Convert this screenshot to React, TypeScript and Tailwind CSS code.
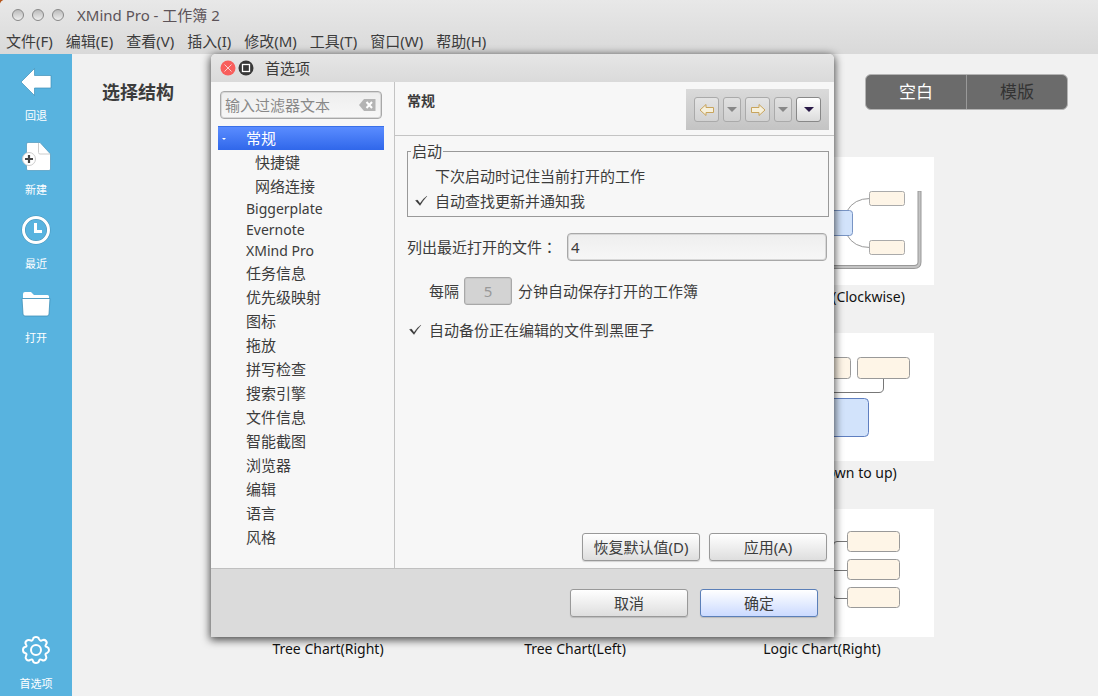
import React from 'react';

const MENUS = ['文件(F)', '编辑(E)', '查看(V)', '插入(I)', '修改(M)', '工具(T)', '窗口(W)', '帮助(H)'];

const TREE = [
  '任务信息',
  '优先级映射',
  '图标',
  '拖放',
  '拼写检查',
  '搜索引擎',
  '文件信息',
  '智能截图',
  '浏览器',
  '编辑',
  '语言',
  '风格',
];

const BUTTON =
  'h-7 w-[118px] rounded-[3px] border border-[#999] bg-linear-to-b from-white to-[#dedede] text-[15px] leading-6 shadow-[0_1px_1px_rgba(0,0,0,0.15)]';

const BackIcon = () => (
  <svg width="32" height="32" viewBox="0 0 32 32">
    <path d="M1 16 14.500 2.500V9.500H31V22H14.500V29.500Z" fill="#fff" stroke="#3f8fb8" strokeWidth="0.700" />
  </svg>
);

const NewIcon = () => (
  <svg width="32" height="32" viewBox="0 0 32 32">
    <path
      d="M8 2.500H20L30.500 14V29Q30.500 30.500 29 30.500H8Q6.500 30.500 6.500 29V4Q6.500 2.500 8 2.500Z"
      fill="#fff"
      stroke="#4d97bb"
      strokeWidth="0.700"
    />
    <path d="M18.500 3V12.500Q18.500 14 20 14H30" fill="none" stroke="#ccc" />
    <circle cx="9" cy="19" r="6.500" fill="#fff" stroke="#ccc" />
    <path d="M9 15V23M5 19H13" stroke="#444" strokeWidth="2.200" />
  </svg>
);

const RecentIcon = () => (
  <svg width="32" height="32" viewBox="0 0 32 32" fill="none">
    <circle cx="16" cy="16" r="12.500" stroke="#4592b8" strokeWidth="4" />
    <circle cx="16" cy="16" r="12.500" stroke="#fff" strokeWidth="3" />
    <path d="M15.500 9V17.500H22" stroke="#fff" strokeWidth="3" />
  </svg>
);

const OpenIcon = () => (
  <svg width="32" height="32" viewBox="0 0 32 32">
    <path d="M3 10V6Q3 4 5 4H11L14 7H27.500Q29 7 29 8.500V10Z" fill="#fff" />
    <path d="M2 10.500H30L29 26Q29 28 27 28H5Q3 28 3 26Z" fill="#fff" stroke="#3f8fb8" strokeWidth="0.800" />
  </svg>
);

const GearIcon = () => (
  <svg width="32" height="32" viewBox="0 0 32 32" fill="none" stroke="#fff" strokeWidth="2">
    <path
      strokeLinejoin="round"
      d="M13 5Q13.500 3 16 3T19 5Q20 7.500 22.500 6.200Q24.500 5.300 26 7T26 10.500Q24.500 12.500 27 13Q29 13.700 29 16T27 19Q24.500 19.800 26 22Q27 24 25.500 25.500T22 26Q19.600 24.600 19 27Q18.500 29 16 29T13 27Q12.400 24.600 10 26Q8 27 6.500 25.500T6 22Q7.500 19.800 5 19Q3 18.500 3 16T5 13Q7.500 12.500 6 10.500Q4.700 8.500 6.300 7T10 6.200Q12.300 7.500 13 5Z"
    />
    <circle cx="16" cy="16" r="5" />
  </svg>
);

const SideItem: React.FC<{ label: string; children: React.ReactNode }> = ({ label, children }) => (
  <button className="flex flex-col items-center gap-[9px] text-[11px] leading-[18px] text-white">
    {children}
    {label}
  </button>
);

const ClockwiseArt = () => (
  <svg className="w-full" viewBox="0 0 224 128" fill="none">
    <path d="M0 110H204Q209.500 110 209.500 105V34" stroke="#999" strokeWidth="4" />
    <path d="M0 110H204Q209.500 110 209.500 105V34.500" stroke="#c4c4c4" strokeWidth="2" />
    <path d="M137 54Q144 41.500 160 41.500M137 78Q144 90.500 160 90.500" stroke="#999" />
    <g fill="#fef5e7" stroke="#aaa">
      <rect x="159.500" y="34.500" width="35" height="14" rx="2" />
      <rect x="159.500" y="83.500" width="35" height="14" rx="2" />
    </g>
    <rect x="82.500" y="53.500" width="60" height="25" rx="3" fill="#d2e3fb" stroke="#7894c4" />
  </svg>
);

const OrgUpArt = () => (
  <svg className="w-full" viewBox="0 0 224 128" fill="none">
    <path d="M173.500 46V55Q173.500 59.500 169 59.500H50" stroke="#777" />
    <g fill="#fef5e7" stroke="#999">
      <rect x="88.500" y="24.500" width="52" height="21" rx="3" />
      <rect x="147.500" y="24.500" width="52" height="21" rx="3" />
    </g>
    <rect x="65.500" y="65.500" width="93" height="38" rx="4" fill="#d2e3fb" stroke="#5f7fc0" />
  </svg>
);

const LogicArt = () => (
  <svg className="w-full" viewBox="0 0 224 128" fill="none">
    <path d="M138 32.500H127Q123.500 32.500 123.500 36V85Q123.500 89.500 127 89.500H138M100 61.500H138" stroke="#777" />
    <g fill="#fef5e7" stroke="#999">
      <rect x="137.500" y="22.500" width="52" height="20" rx="3" />
      <rect x="137.500" y="50.500" width="52" height="20" rx="3" />
      <rect x="137.500" y="78.500" width="52" height="20" rx="3" />
    </g>
  </svg>
);

const STRUCTURES = [
  { id: 1 },
  { id: 2 },
  { id: 3, name: 'Balanced Map(Clockwise)', art: <ClockwiseArt /> },
  { id: 4 },
  { id: 5 },
  { id: 6, name: 'Org Chart(Down to up)', art: <OrgUpArt /> },
  { id: 7, name: 'Tree Chart(Right)' },
  { id: 8, name: 'Tree Chart(Left)' },
  { id: 9, name: 'Logic Chart(Right)', art: <LogicArt /> },
];

const Check: React.FC<{ label: string; checked?: boolean }> = ({ label, checked }) => (
  <label className="flex h-[25px] items-center gap-[6px]">
    <span className="grid size-4 place-items-center">
      <input type="checkbox" defaultChecked={checked} className="peer col-start-1 row-start-1 size-4 appearance-none" />
      <svg
        className="pointer-events-none invisible col-start-1 row-start-1 peer-checked:visible"
        width="16"
        height="16"
        viewBox="0 0 16 16"
      >
        <path d="M2.500 7.500 4.500 7 7 10.500Q9.500 6 14 3 10 7.500 7 12.500Z" fill="#333" stroke="#333" strokeWidth="0.300" />
      </svg>
    </span>
    {label}
  </label>
);

const ArrowButton: React.FC<{ label: string; flip?: boolean }> = ({ label, flip }) => (
  <button
    aria-label={label}
    disabled
    className="grid h-[25px] w-[25px] place-items-center rounded-[3px] border border-[#aaa] bg-linear-to-b from-[#e4e4e4] to-[#d2d2d2]"
  >
    <svg className={flip ? '-scale-x-100' : ''} width="16" height="14" viewBox="0 0 16 14">
      <path d="M1 7 7 1.500V4.500H14.500V9.500H7V12.500Z" fill="#f6f0dc" stroke="#c8a45c" />
    </svg>
  </button>
);

const DropButton: React.FC<{ label: string }> = ({ label }) => (
  <button
    aria-label={label}
    disabled
    className="grid h-[25px] w-[18px] place-items-center rounded-[3px] border border-[#aaa] bg-linear-to-b from-[#e0e0e0] to-[#d0d0d0]"
  >
    <svg width="10" height="5" viewBox="0 0 10 5">
      <path d="M0 0H10L5 5Z" fill="#888" />
    </svg>
  </button>
);

const Preferences = () => (
  <section
    role="dialog"
    aria-label="首选项"
    className="absolute top-[54px] left-[211px] w-[623px] rounded-t-[5px] bg-[#f7f7f7] shadow-[0_2px_9px_1px_rgba(0,0,0,0.7)]"
  >
    <header className="flex h-7 items-center rounded-t-[5px] bg-linear-to-b from-[#e6e6e6] to-[#dadada] pl-[9px]">
      <button aria-label="关闭" className="mr-[2px]">
        <svg width="16" height="16" viewBox="0 0 16 16">
          <circle cx="8" cy="8" r="7.500" fill="#f85e5c" />
          <path d="M4.500 4.500 11.500 11.500M11.500 4.500 4.500 11.500" stroke="#fbd0cf" />
        </svg>
      </button>
      <button aria-label="最大化">
        <svg width="16" height="16" viewBox="0 0 16 16">
          <circle cx="8" cy="8" r="7.500" fill="#383838" />
          <rect x="4.500" y="4.500" width="7" height="7" fill="none" stroke="#fff" strokeWidth="1.300" />
        </svg>
      </button>
      <h2 className="ml-[11px] text-[15px] leading-6">首选项</h2>
    </header>

    <div className="flex h-[486px]">
      <nav className="w-[184px] border-r border-[#c4c4c4] pt-[9px] pr-[10px] pl-[7px]">
        <div className="mr-[2px] ml-[2px] flex h-7 items-center rounded-[4px] border border-[#a8a8a8] bg-linear-to-b from-[#eee] to-[#f7f7f7] pr-[5px] pl-1 shadow-[inset_0_0_0_1px_#d8d8d8]">
          <input
            aria-label="输入过滤器文本"
            placeholder="输入过滤器文本"
            className="min-w-0 flex-1 text-[15px] leading-6 outline-none placeholder:text-[#888]"
          />
          <button aria-label="清除">
            <svg width="17" height="12" viewBox="0 0 17 12">
              <path d="M0 6 5 0H16.500V12H5Z" fill="#b4b4b4" />
              <path d="M7.500 3 13 9M13 3 7.500 9" stroke="#fff" strokeWidth="2" />
            </svg>
          </button>
        </div>
        <ul className="mt-[7px] text-[15px] leading-6">
          <li className="flex items-center border-t border-[#3a70e8] bg-linear-to-b from-[#5a8cff] to-[#3067ea] pl-1 text-white">
            <svg width="4" height="2" viewBox="0 0 4 2">
              <path d="M0 0H4L2 2Z" fill="#fff" />
            </svg>
            <span className="ml-5 leading-[23px]">常规</span>
          </li>
          <li className="pl-[37px]">快捷键</li>
          <li className="pl-[37px]">网络连接</li>
          <li className="pl-7 text-[14px] leading-[21px]">Biggerplate</li>
          <li className="pl-7 text-[14px] leading-[21px]">Evernote</li>
          <li className="pl-7 text-[14px] leading-[21px]">XMind Pro</li>
          {TREE.map((name) => (
            <li key={name} className="pl-7">
              {name}
            </li>
          ))}
        </ul>
      </nav>

      <div className="flex flex-1 flex-col text-[15px] leading-6">
        <div className="flex h-[54px] items-start justify-between border-b border-[#c4c4c4] pt-[7px] pr-[5px] pl-3">
          <h3 className="text-[14px] leading-6 font-bold">常规</h3>
          <div className="flex gap-1 bg-linear-to-b from-[#dadada] to-[#c4c4c4] p-2">
            <ArrowButton label="后退" />
            <DropButton label="后退历史" />
            <ArrowButton label="前进" flip />
            <DropButton label="前进历史" />
            <button
              aria-label="菜单"
              className="grid h-[25px] w-[25px] place-items-center rounded-[3px] border border-[#888] bg-linear-to-b from-white to-[#dcdcdc]"
            >
              <svg width="10" height="5" viewBox="0 0 10 5">
                <path d="M0 0H10L5 5Z" fill="#2a1a48" />
              </svg>
            </button>
          </div>
        </div>

        <div className="flex flex-1 flex-col pt-[3px] pr-[5px] pb-[7px] pl-3">
          <fieldset className="border border-[#999] pb-[3px] pl-[5px]">
            <legend className="-ml-[2px] px-px leading-6">启动</legend>
            <Check label="下次启动时记住当前打开的工作" />
            <Check label="自动查找更新并通知我" checked />
          </fieldset>
          <div className="mt-4 mr-[2px] flex items-center">
            <label htmlFor="recent" className="w-40">
              列出最近打开的文件<span className="font-['Noto_Sans_CJK_TC',sans-serif]" lang="zh-TW">：</span>
            </label>
            <input
              id="recent"
              defaultValue="4"
              className="h-7 min-w-0 flex-1 rounded-[4px] border border-[#a8a8a8] bg-linear-to-b from-[#eee] to-[#f7f7f7] px-[3px] text-[15px] leading-6 shadow-[inset_0_0_0_1px_#d8d8d8]"
            />
          </div>
          <div className="mt-4 ml-[22px] flex items-center">
            <label htmlFor="interval">每隔</label>
            <input
              id="interval"
              defaultValue="5"
              disabled
              className="mr-[6px] ml-[5px] h-7 w-12 rounded-[3px] border border-[#a8a8a8] bg-[#d3d3d3] text-center text-[15px] leading-6 text-[#999] shadow-[inset_0_0_0_1px_#c8c8c8]"
            />
            <span>分钟自动保存打开的工作簿</span>
          </div>
          <div className="mt-3">
            <Check label="自动备份正在编辑的文件到黑匣子" checked />
          </div>
          <div className="mt-auto mr-[2px] flex justify-end gap-[9px]">
            <button className={BUTTON}>恢复默认值(D)</button>
            <button className={BUTTON}>应用(A)</button>
          </div>
        </div>
      </div>
    </div>

    <footer className="flex h-[69px] items-center justify-end gap-3 border-t border-[#c0c0c0] bg-[#dbdbdb] pr-4">
      <button className={BUTTON}>取消</button>
      <button className="h-7 w-[118px] rounded-[3px] border border-[#5b7fb8] bg-linear-to-b from-white to-[#cbdaff] text-[15px] leading-6 shadow-[0_1px_1px_rgba(0,0,0,0.15)]">
        确定
      </button>
    </footer>
  </section>
);

const WindowDot = () => (
  <span className="size-3 rounded-full border border-[#888] bg-linear-to-b from-[#bbb] to-[#eee]" />
);

export default function App() {
  return (
    <div className="bg-[#b5561c]">
      <div className="relative flex min-h-screen flex-col overflow-hidden rounded-tl-[5px] bg-[#f1f1f1] font-['Noto_Sans','Noto_Sans_CJK_SC',sans-serif] text-[#3c3c3c]">
        <header className="bg-linear-to-b from-[#e8e8e8] to-[#d9d9d9]">
          <div className="flex h-[30px] items-center gap-2 pl-3">
            <WindowDot />
            <WindowDot />
            <WindowDot />
            <h1 className="ml-[5px] text-[15px] leading-6 text-[#5c5358]">XMind Pro - 工作簿 2</h1>
          </div>
          <nav className="flex h-6 items-start gap-[13px] pl-[6px] text-[15px] leading-[22px]">
            {MENUS.map((m) => (
              <button key={m}>{m}</button>
            ))}
          </nav>
        </header>

        <div className="flex flex-1">
          <aside className="flex w-[72px] flex-col gap-[15px] bg-[#58b3df] pt-3 pb-[3px]">
            <SideItem label="回退">
              <BackIcon />
            </SideItem>
            <SideItem label="新建">
              <NewIcon />
            </SideItem>
            <SideItem label="最近">
              <RecentIcon />
            </SideItem>
            <SideItem label="打开">
              <OpenIcon />
            </SideItem>
            <div className="mt-auto flex flex-col">
              <SideItem label="首选项">
                <GearIcon />
              </SideItem>
            </div>
          </aside>

          <main className="flex-1 px-[30px] pt-5">
            <div className="flex items-center justify-between">
              <h2 className="text-[18px] leading-6 font-bold">选择结构</h2>
              <div className="flex h-9 w-[203px] overflow-hidden rounded-[6px] border border-[#b4b4b4] bg-[#6b6b6b] text-[17px] leading-6">
                <button className="flex-1 border-r border-[#999] text-white">空白</button>
                <button className="flex-1 text-[#333]">模版</button>
              </div>
            </div>
            <ul className="mt-[47px] grid grid-cols-[224px_224px_224px] justify-center gap-x-[23px] gap-y-6 pr-5">
              {STRUCTURES.map((s) => (
                <li key={s.id} className="text-center text-[14px] leading-6 text-[#111]">
                  <div className="h-32 bg-white">{s.art}</div>
                  {s.name}
                </li>
              ))}
            </ul>
          </main>
        </div>

        <Preferences />
      </div>
    </div>
  );
}
